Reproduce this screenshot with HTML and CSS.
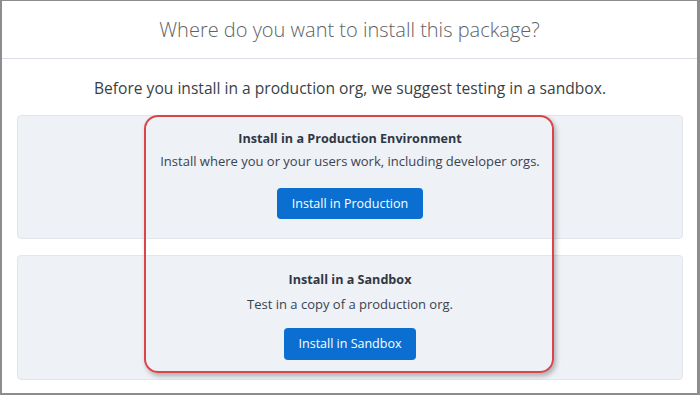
FILE: index.html
```html
<!DOCTYPE html>
<html lang="en">
<head>
<meta charset="utf-8">
<title>Install package</title>
<link rel="stylesheet" href="styles.css">
</head>
<body>
<div class="frame">
  <header class="header">
    <h1 class="title">Where do you want to install this package?</h1>
  </header>
  <main class="content">
    <p class="intro">Before you install in a production org, we suggest testing in a sandbox.</p>
    <div class="options">
      <section class="card card-prod">
        <h2 class="card-title">Install in a Production Environment</h2>
        <p class="card-text">Install where you or your users work, including developer orgs.</p>
        <button class="btn btn-prod" type="button">Install in Production</button>
      </section>
      <section class="card card-sandbox">
        <h2 class="card-title">Install in a Sandbox</h2>
        <p class="card-text">Test in a copy of a production org.</p>
        <button class="btn btn-sandbox" type="button">Install in Sandbox</button>
      </section>
      <div class="highlight"></div>
    </div>
  </main>
</div>
</body>
</html>
```
FILE: styles.css
```css
* { box-sizing: border-box; }
html, body { margin: 0; padding: 0; background: #ffffff; }
body { font-family: "Open Sans", "Noto Sans", sans-serif; }

.frame {
  width: 700px;
  height: 395px;
  border: 2px solid #8d8d8d;
  border-top-width: 1px;
  border-right-width: 3px;
  background: #ffffff;
  display: flex;
  flex-direction: column;
}

.header {
  height: 58px;
  border-bottom: 1px solid #d8dde6;
  display: flex;
  align-items: center;
  justify-content: center;
}

.title {
  margin: 0;
  font-size: 20px;
  font-weight: 300;
  color: #5e6266;
}

.content {
  flex: 1;
  padding: 0 14px 0 15px;
}

.intro {
  margin: 19px 0 0;
  height: 20px;
  line-height: 20px;
  text-align: center;
  font-size: 15.6px;
  color: #3a3f45;
}

.options {
  position: relative;
  margin-top: 17px;
  display: flex;
  flex-direction: column;
  gap: 16px;
}

.card {
  height: 124px;
  background: #eef1f5;
  border: 1px solid #e1e5ec;
  border-radius: 4px;
  display: flex;
  flex-direction: column;
  align-items: center;
  padding-top: 14px;
}

.card-sandbox { height: 125px; padding-top: 15px; }

.card-title {
  margin: 0;
  font-size: 12.6px;
  line-height: 18px;
  font-weight: 700;
  color: #2f3845;
}

.card-text {
  margin: 4px 0 0;
  font-size: 13px;
  line-height: 18px;
  color: #3c4350;
}

.card-sandbox .card-text { margin-top: 6px; }

.btn {
  margin-top: 18px;
  height: 31px;
  padding: 0;
  border: none;
  border-radius: 4px;
  background: #0a6fd0;
  color: #ffffff;
  font-family: inherit;
  font-size: 12.5px;
  line-height: 31px;
  white-space: nowrap;
  text-align: center;
}

.btn-prod { width: 146px; }
.btn-sandbox { width: 132px; height: 32px; line-height: 32px; margin-top: 15px; }

.highlight {
  position: absolute;
  left: 127px;
  top: 0;
  width: 410px;
  height: 258px;
  border: 2px solid #d8464c;
  border-radius: 14px;
  box-shadow: 2px 3px 5px rgba(0, 0, 0, 0.28);
  pointer-events: none;
}
```
